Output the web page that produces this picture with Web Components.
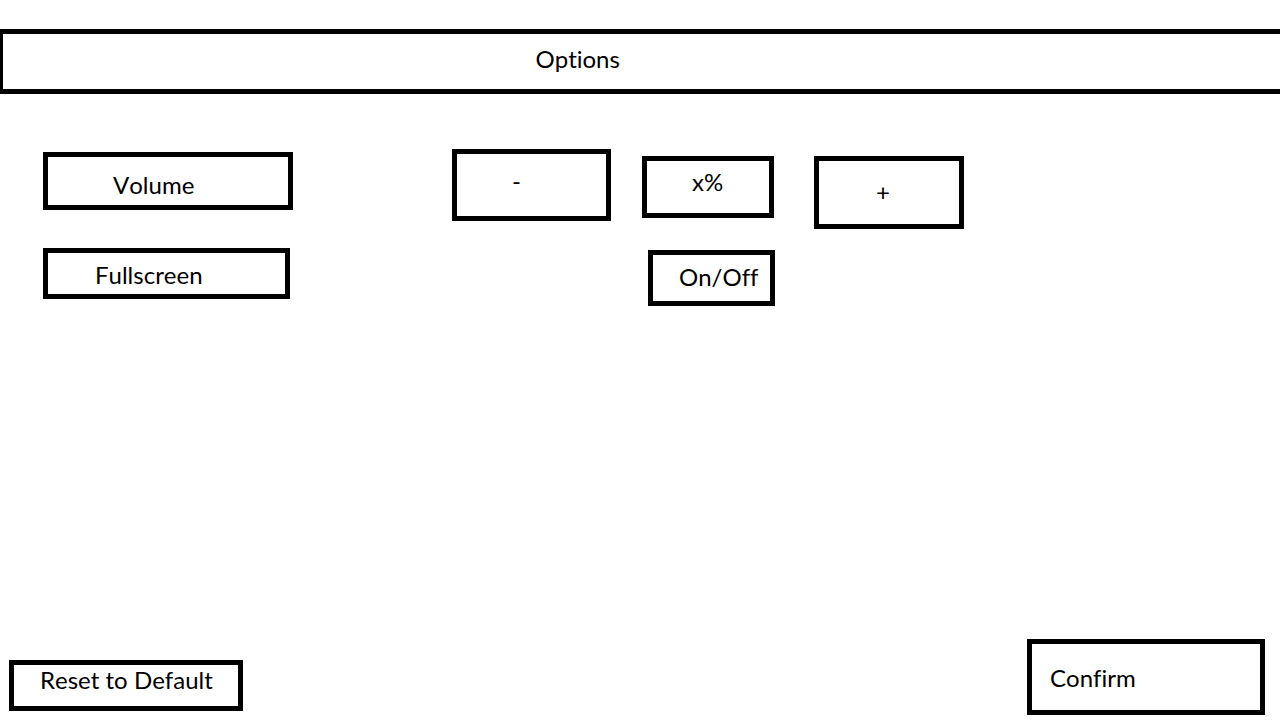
<!DOCTYPE html>
<html lang="en">
<head>
<meta charset="utf-8">
<title>Options</title>
<style>
  body {
    margin: 0; background: #fff; color: #000;
    font: 24px/28px Lato, "Noto Sans", sans-serif;
  }
</style>
</head>
<body>
<options-screen></options-screen>
<script>
  const base = `
    *, :host { box-sizing: border-box; }
    h1, label, output, button {
      display: block; margin: 0; padding: 0; border: 5px solid #000; border-radius: 0;
      background: #fff; color: inherit; font: inherit; text-align: left; white-space: nowrap;
      font-variant-ligatures: none; font-kerning: none;
    }
    button { display: flex; align-items: flex-start; cursor: pointer; }
  `;
  const rowStyle = `
    :host { display: grid; grid-template-columns: 409fr 190fr 172fr 466fr; align-items: start; padding-left: 43px; }
  `;

  function component(name, styles, markup) {
    const template = document.createElement("template");
    template.innerHTML = `<style>${base}${styles}</style>${markup}`;
    customElements.define(name, class extends HTMLElement {
      constructor() {
        super();
        this.attachShadow({ mode: "open" }).append(template.content.cloneNode(true));
      }
    });
  }

  component("options-header", `
    :host { display: block; }
    h1 { min-height: 65px; padding: 11px 0 0 41.6%; border-left-width: 3px; border-right: 0; }
  `, `<h1><slot></slot></h1>`);

  component("volume-setting", rowStyle + `
    label { width: 250px; height: 58px; margin-top: 3px; padding: 14px 0 0 65px; }
    .down { width: 159px; height: 72px; padding: 13px 0 0 55px; }
    output { width: 132px; height: 62px; margin-top: 7px; padding: 7px 0 0 45px; }
    .up { width: 150px; height: 73px; margin-top: 7px; padding: 17px 0 0 57px; }
  `, `
    <label for="volume"><slot></slot></label>
    <button class="down" type="button">-</button>
    <output id="volume">x%</output>
    <button class="up" type="button">+</button>
  `);

  component("fullscreen-setting", rowStyle + `
    label { width: 247px; height: 51px; padding: 8px 0 0 47px; }
    button { grid-column: 3; width: 127px; height: 56px; margin: 2px 0 0 6px; padding: 8px 0 0 26px; }
  `, `
    <label for="toggle"><slot></slot></label>
    <button id="toggle" type="button">On/Off</button>
  `);

  component("reset-button", `
    :host { display: block; }
    button { width: 234px; height: 51px; padding: 1px 0 0 26px; }
  `, `<button type="button"><slot></slot></button>`);

  component("confirm-button", `
    :host { display: block; }
    button { width: 238px; height: 76px; padding: 20px 0 0 18px; }
  `, `<button type="button"><slot></slot></button>`);

  component("options-screen", `
    :host { display: flex; flex-direction: column; min-height: 100vh; padding-top: 29px; }
    main { display: grid; gap: 19px; padding: 55px 0; }
    footer { display: flex; justify-content: space-between; align-items: flex-end; margin-top: auto; padding: 0 15px 5px 9px; }
    reset-button { margin-bottom: 4px; }
  `, `
    <options-header>Options</options-header>
    <main>
      <volume-setting>Volume</volume-setting>
      <fullscreen-setting>Fullscreen</fullscreen-setting>
    </main>
    <footer>
      <reset-button>Reset to Default</reset-button>
      <confirm-button>Confirm</confirm-button>
    </footer>
  `);
</script>
</body>
</html>
